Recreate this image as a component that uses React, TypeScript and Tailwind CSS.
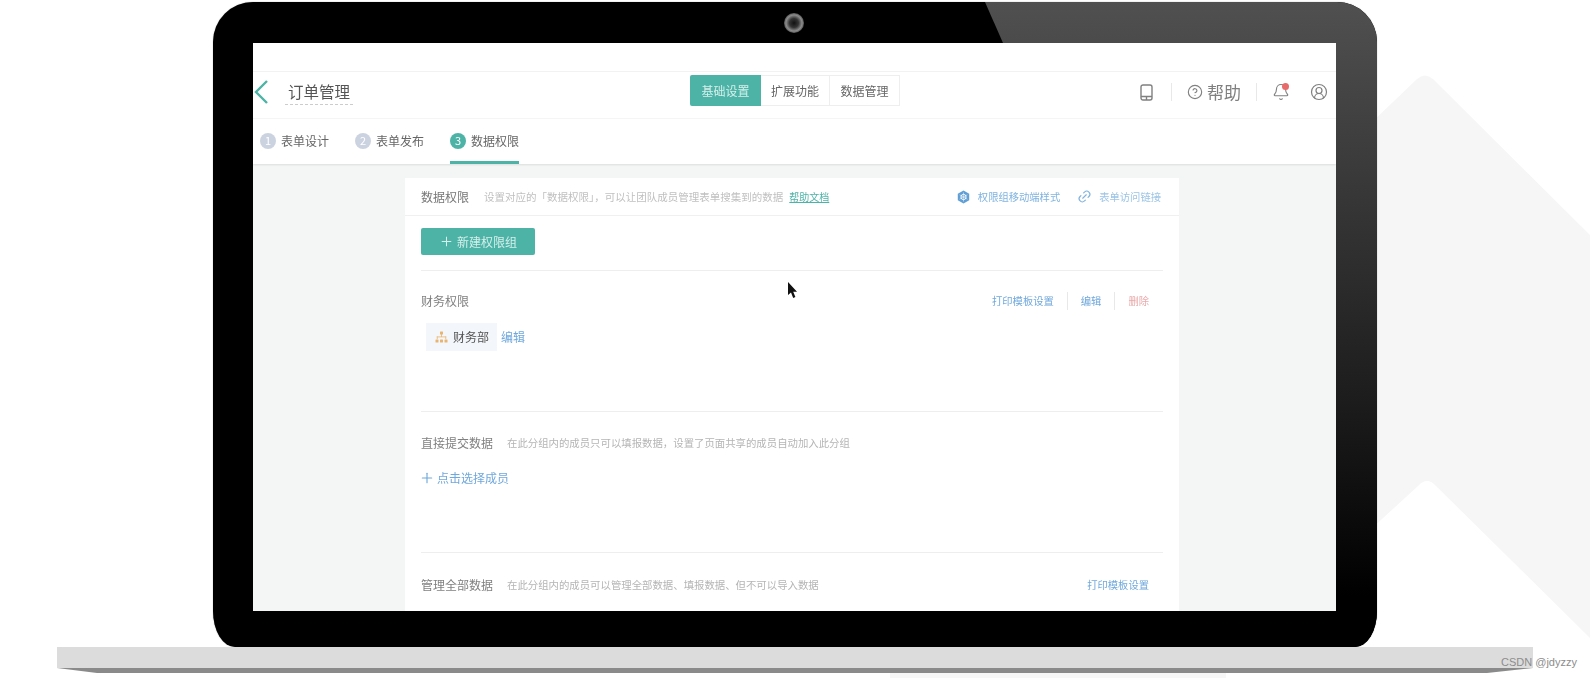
import React from 'react';
import { Bell, CircleHelp, CircleUserRound, Link2, Plus } from 'lucide-react';

const cjk = "font-['Noto_Sans_CJK_SC','Noto_Sans',sans-serif]";

const OrgIcon = () => (
    <svg width="13" height="12" viewBox="0 0 13 12" fill="#e9b46f">
        <rect x="5" y="0.5" width="3" height="3" rx="0.5" />
        <rect x="6.2" y="3" width="0.8" height="3" />
        <rect x="1.8" y="5.5" width="9.4" height="0.8" />
        <rect x="1.8" y="5.5" width="0.8" height="2.5" />
        <rect x="10.4" y="5.5" width="0.8" height="2.5" />
        <rect x="0.5" y="8.5" width="3" height="3" rx="0.5" />
        <rect x="5" y="8.5" width="3" height="3" rx="0.5" />
        <rect x="9.5" y="8.5" width="3" height="3" rx="0.5" />
    </svg>
);

const HexIcon = () => (
    <svg width="13" height="14" viewBox="0 0 13 14">
        <path d="M6.5 0.5 12.2 3.7V10.3L6.5 13.5 0.8 10.3V3.7Z" fill="#5f9fd6" />
        <circle cx="6.5" cy="7" r="2.6" fill="none" stroke="#ffffff" strokeWidth="1" />
        <path d="M6.5 2.5V11.5M2.6 4.8 10.4 9.2M10.4 4.8 2.6 9.2" stroke="#ffffff" strokeWidth="0.5" />
    </svg>
);

const PhoneIcon = () => (
    <svg width="13" height="17" viewBox="0 0 13 17" fill="none" stroke="#808080" strokeWidth="1.4">
        <rect x="1" y="1" width="11" height="15" rx="2" />
        <path d="M1 12.5H12M6.5 12.5V16" />
    </svg>
);

const Step = ({ n, label, active }: { n: number; label: string; active?: boolean }) => (
    <div className={`flex h-full w-[69px] items-center gap-[5px] pt-[1px] ${active ? 'border-b-[3px] border-[#4db3a7]' : 'border-b-[3px] border-transparent'}`}>
        <span className={`flex h-4 w-4 items-center justify-center rounded-full text-[11px] text-white ${active ? 'bg-[#4db3a7]' : 'bg-[#ccd3e0]'}`}>{n}</span>
        <span className="text-xs whitespace-nowrap text-[#666666]">{label}</span>
    </div>
);

const Sep = ({ h = 'h-[18px]' }: { h?: string }) => <span className={`block w-px bg-[#e8e8e8] ${h}`} />;

const Section = ({ title, desc, right, top = 'pt-[20px]', children }: { title: string; desc?: string; right?: React.ReactNode; top?: string; children?: React.ReactNode }) => (
    <div className={`h-[141px] border-t border-[#eeeeee] ${top}`}>
        <div className="flex h-5 items-center pr-[14px]">
            <span className="w-[86px] text-xs whitespace-nowrap text-[#808080]">{title}</span>
            {desc && <span className="text-[10.4px] whitespace-nowrap text-[#b5b5b5]">{desc}</span>}
            <div className="ml-auto flex items-center gap-[13px] text-[10.3px] whitespace-nowrap text-[#6fa8dc]">{right}</div>
        </div>
        {children}
    </div>
);

export default function App() {
    return (
        <div className={`relative h-[678px] w-[1590px] overflow-hidden bg-white pt-[2px] ${cjk}`}>
            {/* background chevrons */}
            <svg className="absolute inset-0" width="1590" height="678" viewBox="0 0 1590 678">
                <path d="M1370 124 1417 79Q1425 72 1433 79L1590 235V638L1436 486Q1427 476 1418 486L1370 530Z" fill="#f6f6f6" />
                <rect x="890" y="673" width="336" height="5" fill="#f7f7f7" />
            </svg>

            {/* laptop lid */}
            <div className="relative ml-[213px] h-[645px] w-[1164px] overflow-hidden rounded-t-[40px] rounded-bl-[22px_36px] rounded-br-[22px_36px] bg-black pt-[41px] pl-[40px] shadow-[0_0_1px_#777777]">
                <svg className="absolute inset-0" width="1164" height="645" viewBox="0 0 1164 645">
                    <defs>
                        <linearGradient id="glare" x1="0" y1="0" x2="0" y2="1">
                            <stop offset="0" stopColor="#505050" />
                            <stop offset="0.62" stopColor="#1c1c1c" />
                            <stop offset="0.92" stopColor="#000000" />
                        </linearGradient>
                        <radialGradient id="lens">
                            <stop offset="0" stopColor="#111111" />
                            <stop offset="0.45" stopColor="#333333" />
                            <stop offset="0.8" stopColor="#8c8c8c" />
                            <stop offset="1" stopColor="#555555" />
                        </radialGradient>
                    </defs>
                    <path d="M772 0H1164V645H1100L790 41Z" fill="url(#glare)" />
                    <circle cx="581" cy="21" r="10" fill="url(#lens)" />
                </svg>

                {/* screen */}
                <div className="relative flex h-[568px] w-[1083px] flex-col overflow-hidden bg-white blur-[0.7px]">
                    <div className="h-[29px] shrink-0 border-b border-[#f2f2f2]" />
                    <div className="grid h-[47px] shrink-0 grid-cols-[437px_210px_1fr] border-b border-[#f6f6f6]">
                        <div className="flex items-center pb-[6px]">
                            <svg className="ml-[1px]" width="14" height="24" viewBox="0 0 14 24" fill="none" stroke="#4db3a7" strokeWidth="2.4">
                                <path d="M13 1 2 12 13 23" />
                            </svg>
                            <span className="ml-[17px] border-b border-dashed border-[#cccccc] px-[3px] pb-[1px] text-[15.5px] leading-[24px] text-[#555555]">订单管理</span>
                        </div>
                        <div className="flex items-start pt-[3px] text-xs text-[#666666]">
                            <span className="flex h-[31px] w-[71px] items-center justify-center rounded-l-[2px] bg-[#4db3a7] text-[#d5efeb]">基础设置</span>
                            <span className="flex h-[31px] w-[69px] items-center justify-center border-y border-r border-[#eeeeee]">扩展功能</span>
                            <span className="flex h-[31px] w-[70px] items-center justify-center border-y border-r border-[#eeeeee]">数据管理</span>
                        </div>
                        <div className="flex items-center justify-end pr-[8px] pb-[6px] text-[#808080]">
                            <PhoneIcon />
                            <span className="ml-[18px]"><Sep /></span>
                            <CircleHelp className="ml-[15px]" size={16} strokeWidth={1.7} />
                            <span className="ml-[4px] text-[17px] whitespace-nowrap">帮助</span>
                            <span className="ml-[15px]"><Sep /></span>
                            <span className="relative ml-[15px]">
                                <Bell size={18} strokeWidth={1.5} />
                                <span className="absolute top-[0px] right-[1px] h-[7px] w-[7px] rounded-full bg-[#e86a6a]" />
                            </span>
                            <CircleUserRound className="ml-[20px]" size={18} strokeWidth={1.6} />
                        </div>
                    </div>
                    <div className="z-10 flex h-[45px] shrink-0 gap-[26px] bg-white pl-[7px] shadow-[0_1px_2px_rgba(0,0,0,0.1)]">
                        <Step n={1} label="表单设计" />
                        <Step n={2} label="表单发布" />
                        <Step n={3} label="数据权限" active />
                    </div>
                    <div className="min-h-0 flex-1 bg-[#f4f6f6] pt-[14px] pl-[152px]">
                        <div className="h-[500px] w-[774px] bg-white">
                            <div className="flex h-[38px] items-center border-b border-[#f0f0f0] pr-[18px] pl-[16px]">
                                <span className="text-xs text-[#777777]">数据权限</span>
                                <span className="ml-[15px] text-[10.5px] whitespace-nowrap text-[#c0c0c0]">设置对应的「数据权限」，可以让团队成员管理表单搜集到的数据</span>
                                <span className="ml-[6px] text-[10px] whitespace-nowrap text-[#4db3a7] underline">帮助文档</span>
                                <div className="ml-auto flex items-center text-[10.3px] whitespace-nowrap text-[#7fb3e0]">
                                    <HexIcon />
                                    <span className="ml-[8px]">权限组移动端样式</span>
                                    <Link2 className="ml-[17px] -rotate-45" size={15} strokeWidth={1.8} />
                                    <span className="ml-[7px] text-[#9cc4e6]">表单访问链接</span>
                                </div>
                            </div>
                            <div className="px-[16px]">
                                <div className="pt-[12px] pb-[15px]">
                                    <button className="flex h-[27px] w-[114px] items-center justify-center gap-[3px] rounded-[2px] bg-[#4db3a7] text-xs text-[#d5efeb]">
                                        <Plus size={15} strokeWidth={1.6} />
                                        新建权限组
                                    </button>
                                </div>
                                <Section
                                    title="财务权限"
                                    right={
                                        <>
                                            <span>打印模板设置</span>
                                            <Sep />
                                            <span>编辑</span>
                                            <Sep />
                                            <span className="text-[#e9aaaa]">删除</span>
                                        </>
                                    }
                                >
                                    <div className="mt-[12px] ml-[5px] flex items-center">
                                        <div className="flex h-[28px] w-[71px] items-center gap-[5px] bg-[#f3f6fa] pl-[9px] text-xs text-[#555555]">
                                            <OrgIcon />
                                            财务部
                                        </div>
                                        <span className="ml-[4px] text-xs text-[#6fa8dc]">编辑</span>
                                    </div>
                                </Section>
                                <Section top="pt-[21px]" title="直接提交数据" desc="在此分组内的成员只可以填报数据，设置了页面共享的成员自动加入此分组">
                                    <div className="mt-[17px] -ml-[2px] flex items-center gap-[2px] text-xs text-[#6fa8dc]">
                                        <Plus size={16} strokeWidth={1.7} />
                                        点击选择成员
                                    </div>
                                </Section>
                                <Section
                                    top="pt-[22px]"
                                    title="管理全部数据"
                                    desc="在此分组内的成员可以管理全部数据、填报数据、但不可以导入数据"
                                    right={<span>打印模板设置</span>}
                                />
                            </div>
                        </div>
                    </div>
                </div>
            </div>

            {/* laptop base */}
            <div className="relative ml-[57px] h-[21px] w-[1476px] bg-[#dcdcdc]" />
            <svg className="ml-[57px] block" width="1476" height="6" viewBox="0 0 1476 6">
                <path d="M0 0H1476L1430 5H40Z" fill="#8a8a8a" />
            </svg>

            {/* pointer */}
            <svg className="absolute top-[282px] left-[787px] blur-[0.4px]" width="12" height="18" viewBox="0 0 12 18">
                <path d="M1 0V13L4 10.5 6.2 16 8.4 15 6.2 9.8H10Z" fill="#111111" />
            </svg>

            <span className="absolute top-[654px] left-[1501px] font-['Liberation_Sans',sans-serif] text-[11px] whitespace-nowrap text-[#8c8c8c]">CSDN @jdyzzy</span>
        </div>
    );
}
